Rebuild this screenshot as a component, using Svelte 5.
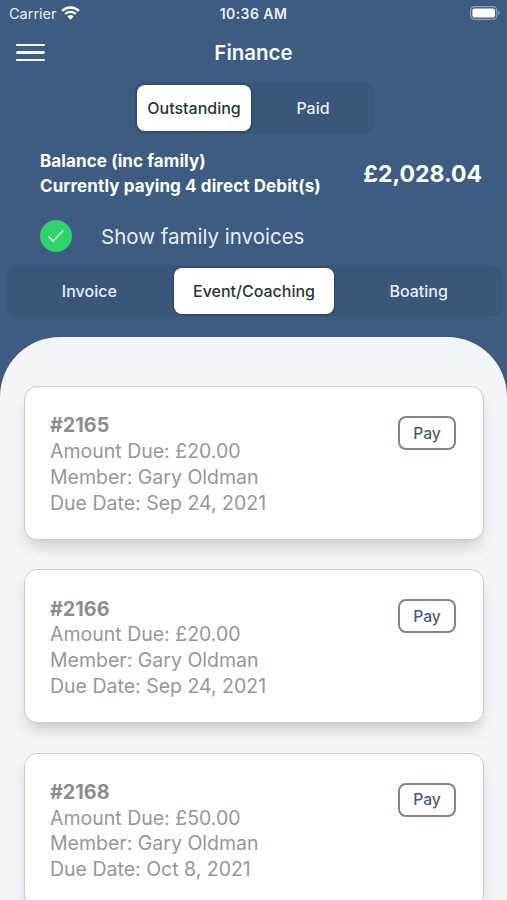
<script>
	let status = $state('Outstanding');
	let category = $state('Event/Coaching');
	let showFamily = $state(true);

	const statuses = ['Outstanding', 'Paid'];
	const categories = ['Invoice', 'Event/Coaching', 'Boating'];

	const invoices = [
		{ id: 2165, amount: '£20.00', member: 'Gary Oldman', due: 'Sep 24, 2021' },
		{ id: 2166, amount: '£20.00', member: 'Gary Oldman', due: 'Sep 24, 2021' },
		{ id: 2168, amount: '£50.00', member: 'Gary Oldman', due: 'Oct 8, 2021' }
	];
</script>

<div class="screen">
	<div class="statusbar">
		<div class="carrier">
			<span>Carrier</span>
			<svg width="19" height="14" viewBox="0 0 19 14" fill="none">
				<path d="M1.1 4.9a11.9 11.9 0 0 1 16.8 0" stroke="#fff" stroke-width="2.6" />
				<path d="M4.2 8a7.6 7.6 0 0 1 10.6 0" stroke="#fff" stroke-width="2.3" />
				<path d="M9.5 13.8 6.4 10.5a4.5 4.5 0 0 1 6.2 0z" fill="#fff" />
			</svg>
		</div>
		<span class="time">10:36 AM</span>
		<svg class="battery" width="31" height="14" viewBox="0 0 31 14" fill="none">
			<rect x="0.6" y="0.6" width="26.2" height="12.8" rx="3.8" stroke="#8fa1bb" stroke-width="1.2" />
			<rect x="2.4" y="2.4" width="22.6" height="9.2" rx="2.2" fill="#fff" />
			<path d="M28.3 4.8c1.8.6 1.8 3.8 0 4.4z" fill="#8fa1bb" />
		</svg>
	</div>

	<header>
		<button class="menu" aria-label="Menu">
			<span></span>
			<span></span>
			<span></span>
		</button>
		<h1>Finance</h1>
	</header>

	<div class="tabs status">
		{#each statuses as item}
			<button class:active={status === item} onclick={() => (status = item)}>{item}</button>
		{/each}
	</div>

	<div class="balance">
		<div class="info">
			<div>Balance (inc family)</div>
			<div>Currently paying 4 direct Debit(s)</div>
		</div>
		<div class="total">£2,028.04</div>
	</div>

	<div class="family">
		<button
			class="check"
			class:off={!showFamily}
			aria-label="Show family invoices"
			onclick={() => (showFamily = !showFamily)}
		>
			{#if showFamily}
				<svg width="18" height="14" viewBox="0 0 18 14" fill="none">
					<path d="M1.5 7.6 6 12.2 16.3 1.6" stroke="#d8f8e4" stroke-width="1.4" />
				</svg>
			{/if}
		</button>
		<span>Show family invoices</span>
	</div>

	<div class="tabs category">
		{#each categories as item}
			<button class:active={category === item} onclick={() => (category = item)}>{item}</button>
		{/each}
	</div>

	<main>
		{#each invoices as invoice (invoice.id)}
			<div class="card">
				<div class="details">
					<strong>#{invoice.id}</strong>
					<span>Amount Due: {invoice.amount}</span>
					<span>Member: {invoice.member}</span>
					<span>Due Date: {invoice.due}</span>
				</div>
				<button class="pay">Pay</button>
			</div>
		{/each}
	</main>
</div>

<style>
	:global(body) {
		margin: 0;
		overflow: hidden;
	}

	.screen {
		display: flex;
		flex-direction: column;
		box-sizing: border-box;
		height: 900px;
		overflow: hidden;
		background: #3e5b81;
		color: #fff;
		font-family: Inter, 'Liberation Sans', sans-serif;
	}

	button {
		padding: 0;
		margin: 0;
		border: none;
		background: none;
		color: inherit;
		font-family: inherit;
		cursor: pointer;
	}

	.statusbar {
		display: grid;
		grid-template-columns: 1fr auto 1fr;
		align-items: center;
		height: 26px;
		padding: 0 6px 0 9px;
		font-size: 14.5px;
		color: #e8eef7;
	}
	.carrier {
		display: flex;
		align-items: center;
		gap: 4px;
	}
	.time {
		font-weight: 600;
		font-size: 14px;
		letter-spacing: 0.45px;
		margin-right: 3px;
	}
	.battery {
		justify-self: end;
	}

	header {
		display: grid;
		grid-template-columns: 1fr auto 1fr;
		align-items: center;
		height: 51px;
		padding: 1px 16px 0;
		box-sizing: border-box;
	}
	.menu {
		display: flex;
		flex-direction: column;
		gap: 5px;
		width: 29px;
		padding-top: 1px;
	}
	.menu span {
		height: 2.4px;
		border-radius: 2px;
		background: #f2f6fc;
	}
	h1 {
		margin: 0;
		font-size: 20.5px;
		font-weight: 600;
		color: #f4f7fc;
	}

	.tabs {
		display: flex;
		box-sizing: border-box;
		flex-shrink: 0;
		height: 52px;
		padding: 3px 0;
		border-radius: 9px;
		background: #3a5679;
	}
	.tabs button {
		flex: 1 1 0;
		margin: 0 2.5px;
		font-size: 16px;
		font-weight: 500;
		color: #e6edf7;
		border-radius: 8px;
	}
	.tabs button.active {
		background: #fff;
		color: #1d3b39;
		box-shadow: 0 0 2px 1px rgba(30, 45, 75, 0.4);
	}
	.status {
		width: 238px;
		margin: 5px 0 0 134.5px;
	}
	.category {
		margin: 12.5px 6px 0 7px;
	}

	.balance {
		display: flex;
		align-items: center;
		justify-content: space-between;
		margin: 15px 25px 0 40px;
		font-weight: 700;
	}
	.info {
		font-size: 17px;
		line-height: 25px;
		letter-spacing: 0.1px;
	}
	.total {
		font-size: 23px;
	}

	.family {
		display: flex;
		align-items: center;
		gap: 29px;
		height: 32px;
		margin: 21px 0 0 40px;
		font-size: 20.5px;
		color: #e6eef9;
	}
	.check {
		display: flex;
		align-items: center;
		justify-content: center;
		width: 32px;
		height: 32px;
		border-radius: 50%;
		background: #2fd36b;
	}
	.check.off {
		background: #6d84a3;
	}

	main {
		flex: 1;
		display: flex;
		flex-direction: column;
		gap: 29.3px;
		min-height: 0;
		margin-top: 20px;
		padding: 49.5px 23px 0 24px;
		border-radius: 60px 60px 0 0;
		background: #f3f5f9;
	}

	.card {
		display: flex;
		justify-content: space-between;
		align-items: flex-start;
		flex-shrink: 0;
		box-sizing: border-box;
		height: 154px;
		padding: 26px 27px 0 25px;
		border: 1.5px solid #cbccd0;
		border-radius: 13px;
		background: #fff;
		box-shadow: 0 10px 14px -4px rgba(60, 50, 50, 0.22);
		color: #96979b;
	}
	.details {
		display: flex;
		flex-direction: column;
		padding-top: 0.4px;
		font-size: 19.5px;
		line-height: 25.7px;
	}
	.details strong {
		font-size: 19.8px;
		font-weight: 700;
		color: #8c8d91;
	}
	.pay {
		width: 58px;
		height: 34px;
		margin-top: 3px;
		border: 2px solid #7a86a0;
		border-radius: 8px;
		font-size: 15.7px;
		font-weight: 500;
		color: #475d84;
	}
</style>
